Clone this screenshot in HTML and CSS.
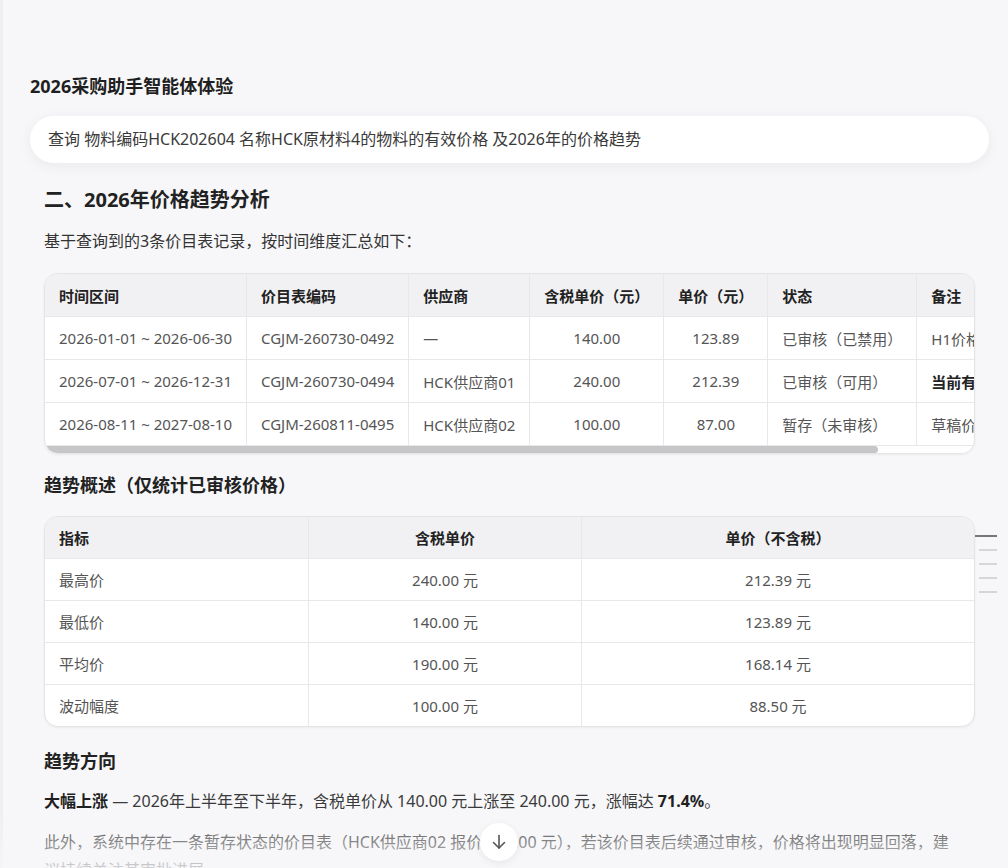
FILE: index.html
```html
<!DOCTYPE html>
<html lang="zh-CN">
<head>
<meta charset="utf-8">
<link rel="stylesheet" href="styles.css">
<title>2026采购助手智能体体验</title>
</head>
<body>
<div class="chat">
  <div class="chat-title">2026采购助手智能体体验</div>
  <div class="query">查询 物料编码HCK202604 名称HCK原材料4的物料的有效价格 及2026年的价格趋势</div>

  <div class="answer">
    <h2>二、2026年价格趋势分析</h2>
    <p class="lead">基于查询到的3条价目表记录，按时间维度汇总如下：</p>

    <div class="table-wrap">
      <div class="scroll-area">
        <table class="grid wide">
          <tr>
            <th>时间区间</th>
            <th>价目表编码</th>
            <th>供应商</th>
            <th class="num">含税单价（元）</th>
            <th class="num">单价（元）</th>
            <th>状态</th>
            <th>备注</th>
          </tr>
          <tr>
            <td>2026-01-01 ~ 2026-06-30</td>
            <td>CGJM-260730-0492</td>
            <td>—</td>
            <td class="num">140.00</td>
            <td class="num">123.89</td>
            <td>已审核（已禁用）</td>
            <td>H1价格，已被替代</td>
          </tr>
          <tr>
            <td>2026-07-01 ~ 2026-12-31</td>
            <td>CGJM-260730-0494</td>
            <td>HCK供应商01</td>
            <td class="num">240.00</td>
            <td class="num">212.39</td>
            <td>已审核（可用）</td>
            <td><b>当前有效价格</b></td>
          </tr>
          <tr>
            <td>2026-08-11 ~ 2027-08-10</td>
            <td>CGJM-260811-0495</td>
            <td>HCK供应商02</td>
            <td class="num">100.00</td>
            <td class="num">87.00</td>
            <td>暂存（未审核）</td>
            <td>草稿价格，尚未生效</td>
          </tr>
        </table>
      </div>
      <div class="scrollbar"><div class="thumb"></div></div>
    </div>

    <h3 class="sub">趋势概述（仅统计已审核价格）</h3>

    <div class="table-wrap">
      <table class="grid full">
        <tr>
          <th class="col-metric">指标</th>
          <th class="num col-tax">含税单价</th>
          <th class="num">单价（不含税）</th>
        </tr>
        <tr><td>最高价</td><td class="num">240.00 元</td><td class="num">212.39 元</td></tr>
        <tr><td>最低价</td><td class="num">140.00 元</td><td class="num">123.89 元</td></tr>
        <tr><td>平均价</td><td class="num">190.00 元</td><td class="num">168.14 元</td></tr>
        <tr><td>波动幅度</td><td class="num">100.00 元</td><td class="num">88.50 元</td></tr>
      </table>
    </div>

    <h3 class="sub spaced">趋势方向</h3>
    <p class="text"><b>大幅上涨</b> — 2026年上半年至下半年，含税单价从 140.00 元上涨至 240.00 元，涨幅达 <b>71.4%</b>。</p>
    <p class="text narrow">此外，系统中存在一条暂存状态的价目表（HCK供应商02 报价 100.00 元），若该价目表后续通过审核，价格将出现明显回落，建议持续关注其审批进展。</p>
  </div>
</div>

<div class="outline">
  <span class="mark active"></span>
  <span class="mark"></span>
  <span class="mark"></span>
  <span class="mark"></span>
  <span class="mark"></span>
</div>

<div class="fade"></div>

<div class="to-bottom">
  <svg width="20" height="20" viewBox="0 0 20 20" fill="none" stroke="#555" stroke-width="1.6" stroke-linecap="round" stroke-linejoin="round">
    <line x1="10" y1="3.5" x2="10" y2="16"/>
    <polyline points="4.5,10.5 10,16 15.5,10.5"/>
  </svg>
</div>
</body>
</html>
```

FILE: styles.css
```css
html {
  background-color: #f7f7f9;
}
body {
  margin: 0;
  height: 868px;
  overflow: hidden;
  font-family: "Noto Sans", "Noto Sans CJK SC", sans-serif;
  color: #333;
  border-left: 3px solid #efeff2;
  box-sizing: border-box;
}
.chat {
  padding: 73px 19px 0 27px;
}
.chat-title {
  font-size: 18px;
  line-height: 26px;
  font-weight: bold;
  color: #1f1f1f;
}
.query {
  margin-top: 17px;
  background: #fff;
  border-radius: 24px;
  padding: 12px 18px;
  font-size: 16px;
  line-height: 23px;
  color: #3a3a3a;
  box-shadow: 0 3px 14px rgba(0, 0, 0, 0.06);
}
.answer {
  padding: 0 14px;
}
h2 {
  margin: 23px 0 0 0;
  font-size: 20px;
  line-height: 28px;
  color: #222;
}
.lead {
  margin: 13px 0 18px 0;
  font-size: 16px;
  line-height: 28px;
}
h3.sub {
  margin: 18px 0 18px 0;
  font-size: 18px;
  line-height: 26px;
  color: #222;
}
h3.sub.spaced {
  margin: 21px 0 13px 0;
}
.text {
  margin: 13px 0 0 0;
  font-size: 16px;
  line-height: 28px;
  color: #3a3a3a;
}
.text.narrow {
  padding-right: 14px;
}
.text b {
  color: #1f1f1f;
}

.table-wrap {
  background: #fff;
  border: 1px solid #e4e4e7;
  border-radius: 14px;
  overflow: hidden;
  box-shadow: 0 1px 3px rgba(0, 0, 0, 0.05);
}
.scroll-area {
  overflow: hidden;
}
.scrollbar {
  height: 7px;
  background: #fff;
}
.scrollbar .thumb {
  width: 833px;
  height: 7px;
  background: #c6c6c8;
  border-radius: 4px;
}
.grid {
  border-collapse: collapse;
  font-size: 15px;
}
.grid.wide {
  white-space: nowrap;
}
.grid.full {
  width: 100%;
}
.grid th, .grid td {
  padding: 0 14px;
  height: 42px;
  text-align: left;
  border-right: 1px solid #e8e8eb;
  border-bottom: 1px solid #e8e8eb;
}
.grid.full th, .grid.full td {
  height: 41px;
}
.grid tr th:last-child, .grid tr td:last-child {
  border-right: none;
}
.grid.full tr:last-child td {
  border-bottom: none;
}
.grid th {
  background: #f1f1f3;
  color: #222;
  font-weight: bold;
}
.grid td {
  color: #555;
}
.grid td b {
  color: #222;
}
.grid .num {
  text-align: center;
}
.col-metric {
  width: 235px;
}
.col-tax {
  width: 244px;
}

.outline {
  position: absolute;
  left: 975px;
  top: 535px;
  width: 22px;
  display: flex;
  flex-direction: column;
  align-items: flex-end;
  gap: 12px;
}
.mark {
  display: block;
  width: 18px;
  height: 2px;
  background: #d6d6d9;
}
.mark.active {
  width: 22px;
  background: #777;
}

.fade {
  position: absolute;
  left: 0;
  right: 0;
  bottom: 0;
  height: 54px;
  background: linear-gradient(rgba(247, 247, 249, 0), rgba(247, 247, 249, 0.8));
}
.to-bottom {
  position: absolute;
  left: 480px;
  top: 823px;
  width: 38px;
  height: 38px;
  border-radius: 50%;
  background: #fff;
  box-shadow: 0 2px 8px rgba(0, 0, 0, 0.07);
  display: flex;
  align-items: center;
  justify-content: center;
}
```
